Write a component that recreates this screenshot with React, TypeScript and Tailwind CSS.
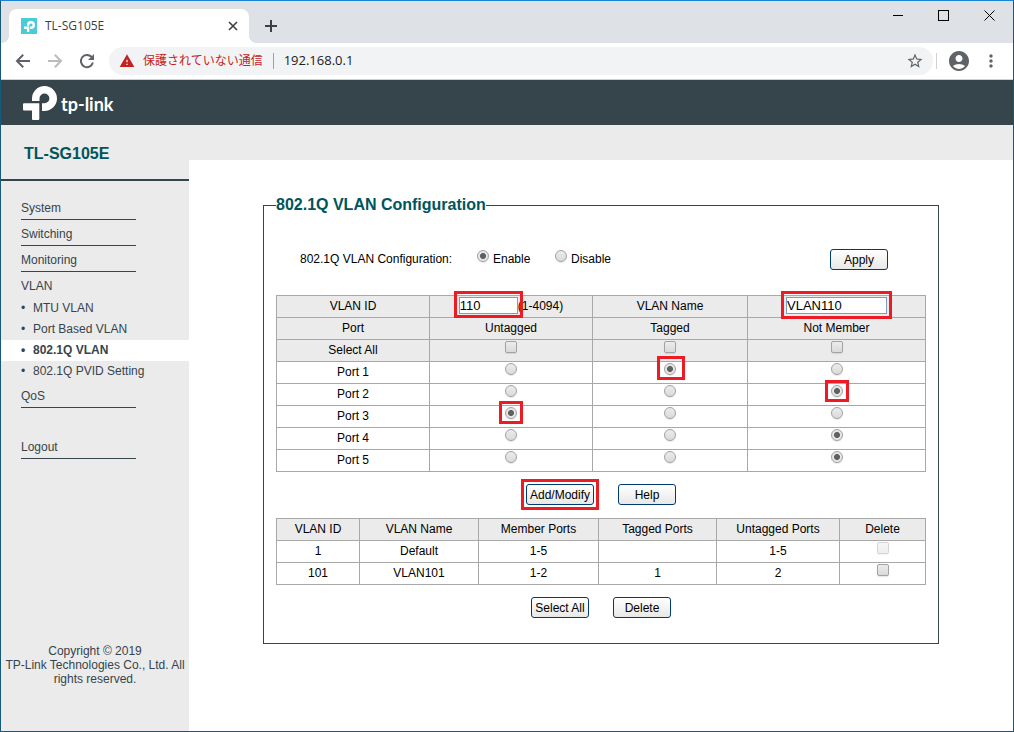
import React from "react";
import { MdAccountCircle, MdMoreVert, MdStarBorder, MdWarning } from "react-icons/md";

const PORT_ROWS = [
  { name: "Port 1", selected: "Tagged", mark: "-top-[7px] -left-[7px] -right-[9px] -bottom-[5px]" },
  { name: "Port 2", selected: "Not Member", mark: "-inset-x-[6px] -inset-y-[5px]" },
  { name: "Port 3", selected: "Untagged", mark: "-inset-x-[6px] -top-[6px] -bottom-[5px]" },
  { name: "Port 4", selected: "Not Member", mark: "" },
  { name: "Port 5", selected: "Not Member", mark: "" },
];

const MEMBERSHIPS = ["Untagged", "Tagged", "Not Member"];

const VLANS = [
  { id: "1", name: "Default", member: "1-5", tagged: "", untagged: "1-5", locked: true },
  { id: "101", name: "VLAN101", member: "1-2", tagged: "1", untagged: "2", locked: false },
];

const VLAN_PAGES = ["MTU VLAN", "Port Based VLAN", "802.1Q VLAN", "802.1Q PVID Setting"];

const TpMark = ({ className }: { className: string }) => (
  <svg viewBox="0 0 34 34" fill="currentColor" className={className} aria-hidden="true">
    <path d="M9 15V12.5A12.5 12.5 0 0 1 34 12.5A12.5 12.5 0 0 1 21.5 25H19V17.3H21.5A4.9 4.9 0 0 0 26.4 12.4A4.9 4.9 0 0 0 16.5 12.4V15Z" />
    <path d="M1 17.3H16.3V33Q16.3 34 15.3 34H10Q9 34 9 33V24.5H1Q0 24.5 0 23.5V18.3Q0 17.3 1 17.3Z" />
  </svg>
);

const NavIcon = ({ children }: { children: React.ReactNode }) => (
  <svg viewBox="0 0 16 16" className="w-4 h-4" fill="none" stroke="currentColor" strokeWidth="2">
    {children}
  </svg>
);

const Mark = ({ className, children }: { className: string; children: React.ReactNode }) => (
  <span className="relative inline-flex">
    {children}
    {className && (
      <span className={`absolute border-3 border-[#ed1c24] pointer-events-none ${className}`} />
    )}
  </span>
);

const Radio = (props: React.InputHTMLAttributes<HTMLInputElement>) => (
  <input
    type="radio"
    className="w-3 h-3 shrink-0 appearance-none rounded-full border border-[#a3a3a3] bg-linear-to-b from-[#ececec] to-[#dadada] shadow-[0_1px_1px_#0000001a] checked:bg-[radial-gradient(circle,#606060_2.6px,#e6e6e6_3.4px)]"
    {...props}
  />
);

const Checkbox = (props: React.InputHTMLAttributes<HTMLInputElement>) => (
  <input
    type="checkbox"
    className="w-3 h-3 shrink-0 appearance-none rounded-xs border border-[#a3a3a3] bg-linear-to-b from-[#ececec] to-[#dadada] shadow-[0_1px_1px_#0000001a] checked:bg-[radial-gradient(circle,#606060_2.6px,#e6e6e6_3.4px)] disabled:opacity-45"
    {...props}
  />
);

const Button = ({ children, wide }: { children: React.ReactNode; wide?: boolean }) => (
  <button
    type="button"
    className={`${wide ? "w-[68px]" : "w-[58px]"} h-[21px] rounded-[3px] border border-[#003c74] bg-linear-to-b from-white to-[#e8e8e6] whitespace-nowrap`}
  >
    {children}
  </button>
);

const BrowserBar = () => (
  <div className="bg-[#dee1e6] text-[#3c4043] font-['Open_Sans','Noto_Sans_CJK_JP',sans-serif]">
    {/* Tab strip */}
    <div className="flex h-[42px]">
      <span className="w-2 h-2 self-end bg-[radial-gradient(circle_at_0_0,#dee1e6_8px,#fff_8px)]" />
      <div className="w-[240px] h-[34px] self-end flex items-center pl-3 pr-[11px] bg-white rounded-t-lg">
        <span className="w-4 h-4 flex items-center justify-center bg-[#4acbd6] text-white">
          <TpMark className="w-[11px] h-[11px]" />
        </span>
        <span className="ml-2 text-xs">TL-SG105E</span>
        <button type="button" aria-label="Close tab" className="ml-auto">
          <svg viewBox="0 0 10 10" className="w-2.5 h-2.5" stroke="#3c4043" strokeWidth="1.6">
            <path d="M1 1L9 9M9 1L1 9" />
          </svg>
        </button>
      </div>
      <span className="w-2 h-2 self-end bg-[radial-gradient(circle_at_100%_0,#dee1e6_8px,#fff_8px)]" />
      <button type="button" aria-label="New tab" className="ml-2 mt-2">
        <svg viewBox="0 0 12 12" className="w-3 h-3" stroke="#3c4043" strokeWidth="2">
          <path d="M6 0V12M0 6H12" />
        </svg>
      </button>
      <div className="ml-auto h-7 flex items-center gap-[35px] pr-[18px]">
        <button type="button" aria-label="Minimize">
          <svg viewBox="0 0 11 11" className="w-[11px] h-[11px]" stroke="#000">
            <path d="M1 5.5H11" />
          </svg>
        </button>
        <button type="button" aria-label="Maximize">
          <svg viewBox="0 0 11 11" className="w-[11px] h-[11px]" stroke="#000" fill="none">
            <rect x="0.5" y="0.5" width="10" height="10" />
          </svg>
        </button>
        <button type="button" aria-label="Close">
          <svg viewBox="0 0 11 11" className="w-[11px] h-[11px]" stroke="#000">
            <path d="M0.5 0.5L10.5 10.5M10.5 0.5L0.5 10.5" />
          </svg>
        </button>
      </div>
    </div>

    {/* Address bar */}
    <div className="h-[37px] flex items-center bg-white border-b border-[#cfd1d4] pl-[14px] pr-3 text-[#5f6368]">
      <div className="flex gap-4">
        <button type="button" aria-label="Back">
          <NavIcon>
            <path d="M15 8H2.5M8.2 1.8L2 8L8.2 14.2" />
          </NavIcon>
        </button>
        <button type="button" aria-label="Forward" className="text-[#babcbe]">
          <NavIcon>
            <path d="M1 8H13.5M7.8 1.8L14 8L7.8 14.2" />
          </NavIcon>
        </button>
        <button type="button" aria-label="Reload">
          <NavIcon>
            <path d="M13.9 9.6A6.1 6.1 0 1 1 12.4 3.8L13.2 4.6" />
            <path d="M15 1V7H9Z" fill="currentColor" stroke="none" />
          </NavIcon>
        </button>
      </div>
      <div className="flex-1 h-7 ml-[14px] flex items-center rounded-full bg-[#f1f3f4] pl-[10px] pr-[9px]">
        <MdWarning size={16} className="text-[#c5221f]" />
        <span className="ml-2 text-xs text-[#c5221f]">保護されていない通信</span>
        <span className="w-px h-4 mx-[10px] bg-[#9aa0a6]" />
        <input
          aria-label="Address"
          defaultValue="192.168.0.1"
          className="flex-1 min-w-0 text-[13px] text-[#202124] outline-none"
        />
        <MdStarBorder size={18} />
      </div>
      <span className="w-px h-4 ml-[3px] bg-[#cfd1d4]" />
      <MdAccountCircle size={24} className="ml-[10px]" />
      <button type="button" aria-label="Menu" className="ml-[10px]">
        <MdMoreVert size={20} />
      </button>
    </div>
  </div>
);

const MenuItem = ({ children, className = "border-b" }: { children: string; className?: string }) => (
  <a
    href="#"
    className={`block w-[115px] h-[26px] ml-5 pt-1.5 leading-4 border-[#36444b] ${className}`}
  >
    {children}
  </a>
);

const Sidebar = () => (
  <aside className="w-[188px] shrink-0 flex flex-col text-[#36444b]">
    <h1 className="h-14 pl-[23px] pt-[19px] border-b-2 border-[#36444b] text-base leading-5 font-bold text-[#00545c]">
      TL-SG105E
    </h1>
    <nav className="pt-[13px]">
      <MenuItem>System</MenuItem>
      <MenuItem>Switching</MenuItem>
      <MenuItem>Monitoring</MenuItem>
      <MenuItem className="">VLAN</MenuItem>
      <ul>
        {VLAN_PAGES.map((page) => (
          <li key={page}>
            <a
              href="#"
              className={`h-[21px] pl-5 pb-0.5 flex items-center gap-2 ${page === "802.1Q VLAN" ? "bg-white font-bold" : ""}`}
            >
              <span className="w-1 text-center">•</span>
              {page}
            </a>
          </li>
        ))}
      </ul>
      <MenuItem>QoS</MenuItem>
      <MenuItem className="mt-[25px] border-b">Logout</MenuItem>
    </nav>
    <p className="mt-auto pb-[45px] px-1 text-center leading-[14px]">
      Copyright © 2019
      <br />
      TP-Link Technologies Co., Ltd. All rights reserved.
    </p>
  </aside>
);

const CELL = "border border-[#a8a8a8] p-0 pb-0.5 h-[22px] leading-4 font-normal text-center";

const PortTable = () => (
  <table className="w-full mt-[25px] table-fixed border-collapse">
    <colgroup>
      <col className="w-[153px]" />
      <col className="w-[163px]" />
      <col className="w-[155px]" />
      <col className="w-[178px]" />
    </colgroup>
    <thead className="bg-[#ebebeb]">
      <tr>
        <th className={CELL}>
          <label htmlFor="vid">VLAN ID</label>
        </th>
        <td className={CELL}>
          <div className="h-[19px] flex items-center justify-center">
            <Mark className="-inset-x-[5px] -top-[6px] -bottom-1">
              <input
                id="vid"
                defaultValue="110"
                className="w-[59px] h-[17px] border border-[#7f9db9] bg-white text-[13px]"
              />
            </Mark>
            (1-4094)
          </div>
        </td>
        <th className={CELL}>
          <label htmlFor="vname">VLAN Name</label>
        </th>
        <td className={CELL}>
          <div className="h-[19px] flex items-center justify-center">
            <Mark className="-inset-x-[5px] -top-[6px] -bottom-[5px]">
              <input
                id="vname"
                defaultValue="VLAN110"
                className="w-[101px] h-[17px] border border-[#7f9db9] bg-white text-[13px]"
              />
            </Mark>
          </div>
        </td>
      </tr>
      <tr>
        <th className={CELL}>Port</th>
        {MEMBERSHIPS.map((m) => (
          <th key={m} className={CELL}>
            {m}
          </th>
        ))}
      </tr>
      <tr>
        <th className={CELL}>Select All</th>
        {MEMBERSHIPS.map((m) => (
          <td key={m} className={CELL}>
            <div className="flex justify-center pb-1.5">
              <Checkbox aria-label={`Select all ${m}`} />
            </div>
          </td>
        ))}
      </tr>
    </thead>
    <tbody>
      {PORT_ROWS.map((port) => (
        <tr key={port.name}>
          <th className={CELL}>{port.name}</th>
          {MEMBERSHIPS.map((m) => (
            <td key={m} className={CELL}>
              <div className="flex justify-center pb-1.5">
                <Mark className={port.selected === m ? port.mark : ""}>
                  <Radio
                    name={port.name}
                    aria-label={`${port.name} ${m}`}
                    defaultChecked={port.selected === m}
                  />
                </Mark>
              </div>
            </td>
          ))}
        </tr>
      ))}
    </tbody>
  </table>
);

const VlanTable = () => (
  <table className="w-full mt-[13px] table-fixed border-collapse">
    <colgroup>
      <col className="w-[83px]" />
      <col className="w-[119px]" />
      <col className="w-[120px]" />
      <col className="w-[118px]" />
      <col className="w-[123px]" />
      <col className="w-[86px]" />
    </colgroup>
    <thead className="bg-[#ebebeb]">
      <tr>
        {["VLAN ID", "VLAN Name", "Member Ports", "Tagged Ports", "Untagged Ports", "Delete"].map(
          (title) => (
            <th key={title} className={CELL}>
              {title}
            </th>
          )
        )}
      </tr>
    </thead>
    <tbody>
      {VLANS.map((vlan) => (
        <tr key={vlan.id}>
          <td className={CELL}>{vlan.id}</td>
          <td className={CELL}>{vlan.name}</td>
          <td className={CELL}>{vlan.member}</td>
          <td className={CELL}>{vlan.tagged}</td>
          <td className={CELL}>{vlan.untagged}</td>
          <td className={CELL}>
            <div className="flex justify-center pb-1.5">
              <Checkbox aria-label={`Delete VLAN ${vlan.id}`} disabled={vlan.locked} />
            </div>
          </td>
        </tr>
      ))}
    </tbody>
  </table>
);

const App = () => {
  return (
    <div className="min-h-screen flex flex-col border border-[#17597a] border-t-[#1883d7] bg-[#ebebeb] text-xs text-black font-['Liberation_Sans',Arial,sans-serif]">
      <BrowserBar />

      <header className="h-[45px] flex items-center gap-1 pl-[22px] bg-[#36444b] text-white">
        <TpMark className="w-[34px] h-[34px]" />
        <span className="pt-0.5 text-lg leading-6 font-bold font-['Lato',sans-serif]">tp-link</span>
      </header>

      <div className="flex-1 flex">
        <Sidebar />

        <main className="flex-1 mt-[35px] px-[74px] pt-9 bg-white">
          <fieldset className="border border-[#36444b] px-3 pt-[35px] pb-[25px]">
            <legend className="text-base leading-[18px] font-bold text-[#00545c]">
              802.1Q VLAN Configuration
            </legend>

            <div className="h-[21px] flex items-center pl-6 pr-[38px]">
              <span className="w-[177px] pb-0.5">802.1Q VLAN Configuration:</span>
              <label className="w-[78px] pb-0.5 flex items-center gap-1">
                <span className="flex pb-1.5">
                  <Radio name="qvlan" defaultChecked />
                </span>
                Enable
              </label>
              <label className="pb-0.5 flex items-center gap-1">
                <span className="flex pb-1.5">
                  <Radio name="qvlan" />
                </span>
                Disable
              </label>
              <span className="ml-auto">
                <Button>Apply</Button>
              </span>
            </div>

            <PortTable />

            <div className="mt-3 flex justify-center gap-6">
              <Mark className="-inset-[5px]">
                <Button wide>Add/Modify</Button>
              </Mark>
              <Button>Help</Button>
            </div>

            <VlanTable />

            <div className="mt-3 flex justify-center gap-6">
              <Button>Select All</Button>
              <Button>Delete</Button>
            </div>
          </fieldset>
        </main>
      </div>
    </div>
  );
};

export default App;
